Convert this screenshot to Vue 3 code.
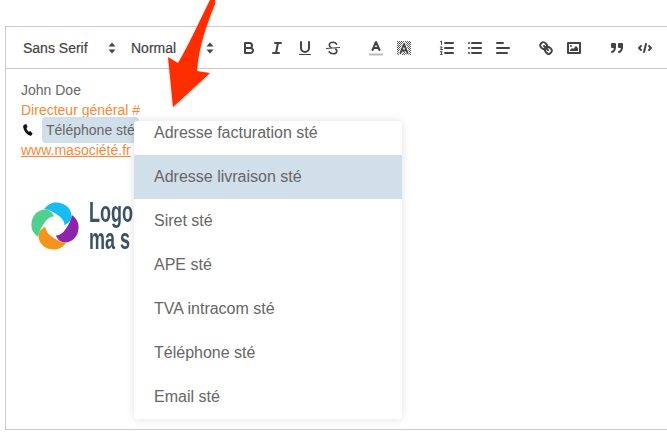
<script setup>
const items = ['Adresse facturation sté', 'Adresse livraison sté', 'Siret sté', 'APE sté', 'TVA intracom sté', 'Téléphone sté', 'Email sté']
</script>

<template>
  <div class="page">
    <div class="toolbar">
      <div class="picker font"><span>Sans Serif</span><svg class="updown" viewBox="0 0 8 12"><path d="M4 .5 7.5 4.5H.5ZM4 11.5 .5 7.5h7Z"/></svg></div>
      <div class="picker header"><span>Normal</span><svg class="updown" viewBox="0 0 8 12"><path d="M4 .5 7.5 4.5H.5ZM4 11.5 .5 7.5h7Z"/></svg></div>
      <div class="group first">
        <button><svg viewBox="0 0 18 18"><path d="M5,4H9.5A2.5,2.5,0,0,1,12,6.5v0A2.5,2.5,0,0,1,9.5,9H5V4Z"/><path d="M5,9h5.5A2.5,2.5,0,0,1,13,11.5v0A2.5,2.5,0,0,1,10.5,14H5V9Z"/></svg></button>
        <button><svg viewBox="0 0 18 18"><path d="M7 4H13M5 14H11M8 14 10 4"/></svg></button>
        <button><svg viewBox="0 0 18 18"><path d="M5,3V9a4,4,0,0,0,4,4h0a4,4,0,0,0,4-4V3"/><rect class="fill" x="3" y="15" width="12" height="1" rx=".5"/></svg></button>
        <button><svg viewBox="0 0 18 18"><path class="thin" d="M2.5 9.5 15.5 8.5"/><path class="mid" d="M12.6 5.2C11.8 3.8 10.4 3.2 9 3.2 7 3.2 5.3 4.2 5.3 6 5.3 7.2 6 7.9 7 8.4M11.6 10C12.4 10.6 12.8 11.3 12.8 12.2 12.8 14 11 14.8 9.2 14.8 7.5 14.8 6 14.2 5.1 12.8"/></svg></button>
      </div>
      <div class="group">
        <button><svg viewBox="0 0 18 18"><path class="label" d="M3 15.5H15"/><path d="M5.5 11 9 3 12.5 11M6.4 9H11.6"/></svg></button>
        <button><svg viewBox="0 0 18 18"><defs><pattern id="dots" width="2" height="2" patternUnits="userSpaceOnUse"><rect class="dot" width="1" height="1"/><rect class="dot" x="1" y="1" width="1" height="1"/></pattern></defs><rect x="2" y="2" width="14" height="14" fill="url(#dots)" stroke="none"/><path class="halo" d="M5.5 14 9 5 12.5 14"/><path d="M5.5 14 9 5 12.5 14M6.4 11.5H11.6"/></svg></button>
      </div>
      <div class="group">
        <button><svg viewBox="0 0 18 18"><path d="M7 4H15M7 9H15M7 14H15"/><path class="thin" d="M2.5 2.5 3.5 2V5.5M2.3 8H4.2L2.4 10.5H4.4M2.3 12.7H4.2L3.2 14 4.3 15.4H2.3"/></svg></button>
        <button><svg viewBox="0 0 18 18"><path d="M6 4H15M6 9H15M6 14H15M3 4H3.01M3 9H3.01M3 14H3.01"/></svg></button>
        <button><svg viewBox="0 0 18 18"><path d="M3 9H15M3 14H13M3 4H9"/></svg></button>
      </div>
      <div class="group">
        <button><svg viewBox="0 0 18 18"><path d="M7 7 11 11"/><path d="M8.9,4.577a3.476,3.476,0,0,1,.36,4.679A3.476,3.476,0,0,1,4.577,8.9C3.185,7.5,2.035,6.4,4.217,4.217S7.5,3.185,8.9,4.577Z"/><path d="M13.423,9.1a3.476,3.476,0,0,0-4.679-.36,3.476,3.476,0,0,0,.36,4.679c1.392,1.392,2.5,2.542,4.679.36S14.815,10.5,13.423,9.1Z"/></svg></button>
        <button><svg viewBox="0 0 18 18"><rect x="3" y="4" width="12" height="10"/><circle class="fill" cx="6" cy="7" r="1"/><path class="fill" d="M5 12V11L7 9 8 10 11 7 13 9V12Z"/></svg></button>
      </div>
      <div class="group">
        <button><svg viewBox="0 0 18 18"><rect class="solid" x="4" y="5" width="3" height="3"/><rect class="solid" x="11" y="5" width="3" height="3"/><path d="M7,8c0,4.031-3,5-3,5M14,8c0,4.031-3,5-3,5"/></svg></button>
        <button><svg viewBox="0 0 18 18"><path d="M5 7 3 9 5 11M13 7 15 9 13 11M10 5 8 13"/></svg></button>
      </div>
    </div>

    <div class="editor">
      <p>John Doe</p>
      <p class="orange">Directeur général #</p>
      <p class="phone-line">
        <svg class="phone" viewBox="0 0 10 12"><path d="M1.6 .5 3.3 0 4.6 3 3.4 4.1C3.7 5.4 4.6 6.9 5.7 7.7L7.2 7.1 9.6 9.5 8.8 11C8.3 11.8 7.5 12 6.7 11.6 3.2 10 .8 6.8.2 3.2 0 2 .5 1 1.6 .5Z"/></svg>
        <span class="chip">Téléphone sté</span>
      </p>
      <p><a class="orange link">www.masociété.fr</a></p>
      <div class="logo">
        <svg class="mark" viewBox="0 0 50 50">
          <g transform="translate(25 25)">
            <path v-for="(c, i) in ['#17bdf2', '#8e24aa', '#f5941d', '#4fd08f']" :key="c" :fill="c" :transform="`rotate(${i * 90})`" d="M-11 -17C-7 -22 -3 -23.6 1.5 -23.6 10 -23.4 16.5 -17.5 16.5 -10 16.5 -6.5 14.5 -3 9.5 -.8 9.5 -4.5 7.5 -7.5 4 -10 0 -13 -5 -16 -11 -17Z"/>
          </g>
        </svg>
        <div class="logo-text"><div>Logo</div><div>ma s</div></div>
      </div>
    </div>

    <div class="menu">
      <ul>
        <li v-for="(it, i) in items" :key="it" :class="{ active: i === 1 }">{{ it }}</li>
      </ul>
    </div>

    <svg class="arrow" viewBox="0 0 60 112">
      <defs><filter id="soft" x="-20%" y="-20%" width="140%" height="140%"><feDropShadow dx="0" dy="1" stdDeviation="1" flood-color="#000" flood-opacity=".25"/></filter></defs>
      <path filter="url(#soft)" fill="#ff2d00" d="M49 -2C53 -2 54 1 53 4 45 24 37 45 35 71L48 73 11 107 6 57 16 63C27 44 38 20 49 -2Z"/>
    </svg>
  </div>
</template>

<style>
html, body { margin: 0; background: #fff; }
</style>

<style scoped>
.page {
  position: relative;
  width: 667px;
  height: 437px;
  overflow: hidden;
  padding: 26px 0 0 5px;
  box-sizing: border-box;
  font-family: "Liberation Sans", Arial, sans-serif;
  color: #666;
}
.toolbar {
  display: flex;
  align-items: center;
  width: 670px;
  height: 43px;
  box-sizing: border-box;
  border: 1px solid #ccc;
  padding: 8px;
}
.picker {
  display: flex;
  flex: none;
  align-items: center;
  justify-content: space-between;
  height: 24px;
  box-sizing: border-box;
  padding: 0 6px 0 9px;
  font-size: 14px;
  font-weight: 400;
  color: #444;
  -webkit-text-stroke: .2px #444;
}
.font { width: 108px; }
.header { width: 98px; }
.updown { width: 8px; height: 12px; fill: #444; }
.group { display: flex; flex: none; margin-left: 15px; }
button {
  display: block;
  flex: none;
  width: 28px;
  height: 24px;
  padding: 3px 5px;
  border: 0;
  background: none;
  box-sizing: border-box;
}
button svg {
  display: block;
  width: 18px;
  height: 18px;
  fill: none;
  stroke: #444;
  stroke-width: 2;
  stroke-linecap: round;
  stroke-linejoin: round;
}
button svg .thin { stroke-width: 1; }
button svg .mid { stroke-width: 1.6; }
button svg .fill { fill: #444; stroke: none; }
button svg .solid { fill: #444; }
button svg .dot { fill: #555; stroke: none; }
button svg .halo { stroke: #fff; stroke-width: 3.5; }
button svg .label { stroke: #bbb; stroke-width: 2; stroke-linecap: square; }
.editor {
  width: 670px;
  height: 361px;
  box-sizing: border-box;
  border: 1px solid #ccc;
  border-top: 0;
  padding: 11px 15px;
  font-size: 14px;
  line-height: 20px;
}
p { margin: 0; }
.orange { color: #f58a38; }
.link { text-decoration: underline; }
.phone-line { display: flex; align-items: center; gap: 9px; height: 20px; }
.phone { width: 10px; height: 12px; fill: #111; margin-left: 2px; flex: none; }
.chip {
  padding: 3.5px 4px 3px;
  border-radius: 4px;
  background: #d1dfea;
  white-space: nowrap;
}
.logo { display: flex; align-items: center; margin: 41px 0 0 9px; height: 50px; }
.mark { width: 50px; height: 50px; flex: none; }
.logo-text {
  margin-left: 9px;
  font-size: 29px;
  font-weight: 700;
  line-height: 27px;
  color: #3d5166;
  transform: scaleX(.62);
  transform-origin: left center;
  white-space: nowrap;
}
.menu {
  position: absolute;
  left: 134px;
  top: 121px;
  width: 268px;
  height: 298px;
  overflow: hidden;
  background: #fff;
  border-radius: 3px;
  box-shadow: 0 0 10px rgba(0, 0, 0, .12);
}
ul { list-style: none; margin: -10px 0 0; padding: 0; }
li {
  height: 44px;
  padding-left: 20px;
  font-size: 16px;
  line-height: 44px;
  color: #666;
}
li.active { background: #d1dfea; }
.arrow {
  position: absolute;
  left: 162px;
  top: 0;
  width: 60px;
  height: 112px;
  overflow: visible;
}
</style>
